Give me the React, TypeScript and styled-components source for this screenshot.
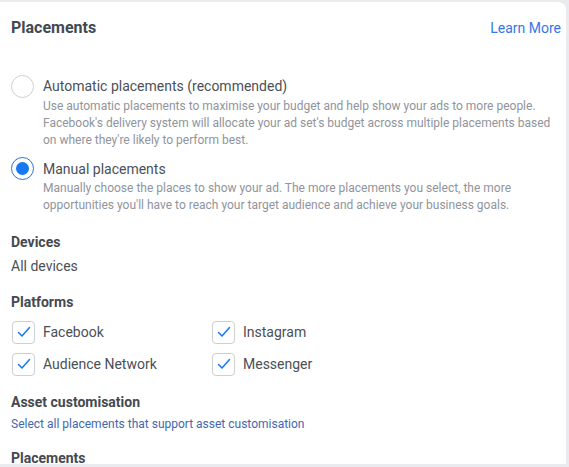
import React from "react";
import styled, { createGlobalStyle } from "styled-components";

const Global = createGlobalStyle`
  html, body { margin: 0; padding: 0; background: #e9ebee; }
  body { font-family: Roboto, "Liberation Sans", Arial, sans-serif; -webkit-font-smoothing: antialiased; }
  * { box-sizing: border-box; }
`;

const Card = styled.div`
  margin: 2px 0 0 -8px;
  width: 574px;
  height: 462px;
  background: #fff;
  border-radius: 8px 8px 0 0;
  overflow: hidden;
  padding: 16px 5px 0 19px;
  display: flex;
  flex-direction: column;
`;

const Header = styled.div`
  display: flex;
  justify-content: space-between;
  align-items: center;
  height: 20px;
`;

const Title = styled.div`
  font-size: 16px;
  font-weight: 700;
  color: #444950;
  line-height: 20px;
`;

const LearnMore = styled.a`
  font-size: 14px;
  color: #3578e5;
  text-decoration: none;
  line-height: 20px;
`;

const RadioGroup = styled.div`
  margin-top: 38px;
  display: flex;
  flex-direction: column;
  gap: 10px;
`;

const RadioItem = styled.div`
  display: grid;
  grid-template-columns: 32px 1fr;
`;

const RadioCircle = styled.span<{ $checked?: boolean }>`
  width: 23px;
  height: 23px;
  margin-top: -1.5px;
  border-radius: 50%;
  border: 1px solid ${(p) => (p.$checked ? "#1877f2" : "#ccd0d5")};
  display: flex;
  align-items: center;
  justify-content: center;
  &::after {
    content: "";
    width: 13px;
    height: 13px;
    border-radius: 50%;
    background: ${(p) => (p.$checked ? "#1877f2" : "transparent")};
  }
`;

const RadioLabel = styled.div`
  font-size: 14px;
  line-height: 20px;
  color: #4b4f56;
`;

const Desc = styled.div`
  grid-column: 2;
  font-size: 12px;
  line-height: 17px;
  color: #90949c;
  margin-top: 0px;
`;

const Heading = styled.div<{ $mt: number }>`
  font-size: 14px;
  font-weight: 700;
  line-height: 20px;
  color: #444950;
  margin-top: ${(p) => p.$mt}px;
`;

const Plain = styled.div`
  font-size: 14px;
  line-height: 20px;
  color: #4b4f56;
  margin-top: 4px;
`;

const CheckGrid = styled.div`
  margin-top: 9px;
  display: grid;
  grid-template-columns: 200px 200px;
  row-gap: 10px;
`;

const CheckRow = styled.label`
  display: flex;
  align-items: center;
  gap: 8px;
  height: 22px;
  font-size: 14px;
  color: #4b4f56;
`;

const Box = styled.span`
  width: 23px;
  height: 23px;
  margin-left: 1px;
  border: 1px solid #ccd0d5;
  border-radius: 4px;
  display: flex;
  align-items: center;
  justify-content: center;
  background: #fff;
`;

const LinkText = styled.a`
  display: block;
  margin-top: 4px;
  font-size: 12px;
  line-height: 16px;
  color: #4267b2;
  text-decoration: none;
`;

const Check = () => (
  <svg width="16" height="16" viewBox="0 0 16 16" fill="none">
    <path d="M2.5 8.5 L6 12 L13.5 3.5" stroke="#1877f2" strokeWidth="1.5" strokeLinecap="round" strokeLinejoin="round" />
  </svg>
);

const Checkbox = ({ label }: { label: string }) => (
  <CheckRow>
    <Box>
      <Check />
    </Box>
    {label}
  </CheckRow>
);

export default function App() {
  return (
    <>
      <Global />
      <Card>
        <Header>
          <Title>Placements</Title>
          <LearnMore href="#">Learn More</LearnMore>
        </Header>
        <RadioGroup>
          <RadioItem>
            <RadioCircle />
            <RadioLabel>Automatic placements (recommended)</RadioLabel>
            <Desc>
              Use automatic placements to maximise your budget and help show your ads to more people.
              <br />
              Facebook's delivery system will allocate your ad set's budget across multiple placements based
              <br />
              on where they're likely to perform best.
            </Desc>
          </RadioItem>
          <RadioItem>
            <RadioCircle $checked />
            <RadioLabel>Manual placements</RadioLabel>
            <Desc>
              Manually choose the places to show your ad. The more placements you select, the more
              <br />
              opportunities you'll have to reach your target audience and achieve your business goals.
            </Desc>
          </RadioItem>
        </RadioGroup>
        <Heading $mt={18}>Devices</Heading>
        <Plain>All devices</Plain>
        <Heading $mt={16}>Platforms</Heading>
        <CheckGrid>
          <Checkbox label="Facebook" />
          <Checkbox label="Instagram" />
          <Checkbox label="Audience Network" />
          <Checkbox label="Messenger" />
        </CheckGrid>
        <Heading $mt={17}>Asset customisation</Heading>
        <LinkText href="#">Select all placements that support asset customisation</LinkText>
        <Heading $mt={16}>Placements</Heading>
      </Card>
    </>
  );
}
